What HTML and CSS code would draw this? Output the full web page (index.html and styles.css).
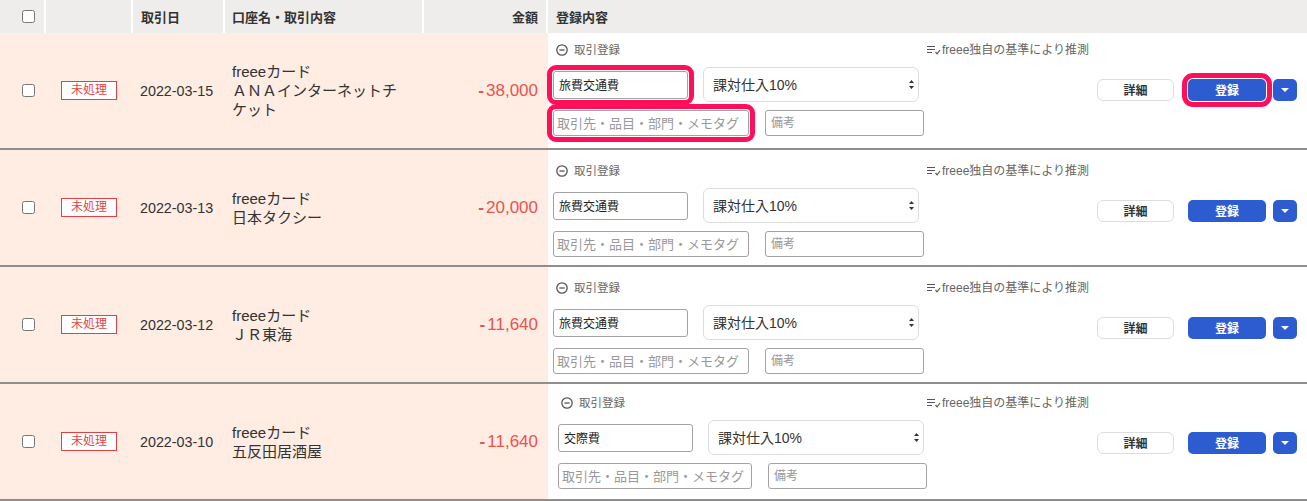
FILE: index.html
```html
<!DOCTYPE html>
<html lang="ja">
<head>
  <meta charset="UTF-8" />
  <meta name="viewport" content="width=device-width, initial-scale=1" />
  <title>明細一覧</title>
  <link rel="stylesheet" href="styles.css">
</head>
<body>
  <div class="list">
    <div class="row head">
      <div class="cell check"><input type="checkbox"></div>
      <div class="cell"></div>
      <div class="cell">取引日</div>
      <div class="cell">口座名・取引内容</div>
      <div class="cell amount">金額</div>
      <div class="cell">登録内容</div>
    </div>

    <div class="row item">
      <div class="cell check"><input type="checkbox"></div>
      <div class="cell status"><span class="badge">未処理</span></div>
      <div class="cell date">2022-03-15</div>
      <div class="cell account">freeeカード<br>ＡＮＡインターネットチケット</div>
      <div class="cell amount"><span class="minus">-</span>38,000</div>
      <div class="cell reg reg-top">
        <div class="reg-title"><svg width="12" height="12" viewBox="0 0 12 12"><circle cx="6" cy="6" r="5.2" fill="none" stroke="#555" stroke-width="1.3"/><path d="M3.4 6h5.2" stroke="#555" stroke-width="1.3"/></svg>取引登録</div>
        <div class="guess"><svg width="14" height="10" viewBox="0 0 14 10"><path d="M0 1.5h8M0 4.5h8M0 7.5h5" stroke="#555" stroke-width="1.2"/><path d="M8.5 7l1.6 1.8L13 5" fill="none" stroke="#555" stroke-width="1.2"/></svg>freee独自の基準により推測</div>
        <div class="actions">
          <button class="btn">詳細</button>
          <button class="btn primary mark">登録</button>
          <button class="btn primary caret"><svg width="8" height="4" viewBox="0 0 8 4"><path d="M0 0h8L4 4z" fill="#fff"/></svg></button>
        </div>
        <div class="line1">
          <input class="field item-name mark" value="旅費交通費">
          <div class="select"><select><option>課対仕入10%</option></select><svg width="5" height="9" viewBox="0 0 5 9"><path d="M2.5 0L5 3H0z M2.5 9L5 6H0z" fill="#333"/></svg></div>
        </div>
        <div class="line2">
          <input class="field tags mark" placeholder="取引先・品目・部門・メモタグ">
          <input class="field memo" placeholder="備考">
        </div>
      </div>
    </div>

    <div class="row item">
      <div class="cell check"><input type="checkbox"></div>
      <div class="cell status"><span class="badge">未処理</span></div>
      <div class="cell date">2022-03-13</div>
      <div class="cell account">freeeカード<br>日本タクシー</div>
      <div class="cell amount"><span class="minus">-</span>20,000</div>
      <div class="cell reg">
        <div class="reg-title"><svg width="12" height="12" viewBox="0 0 12 12"><circle cx="6" cy="6" r="5.2" fill="none" stroke="#555" stroke-width="1.3"/><path d="M3.4 6h5.2" stroke="#555" stroke-width="1.3"/></svg>取引登録</div>
        <div class="guess"><svg width="14" height="10" viewBox="0 0 14 10"><path d="M0 1.5h8M0 4.5h8M0 7.5h5" stroke="#555" stroke-width="1.2"/><path d="M8.5 7l1.6 1.8L13 5" fill="none" stroke="#555" stroke-width="1.2"/></svg>freee独自の基準により推測</div>
        <div class="actions">
          <button class="btn">詳細</button>
          <button class="btn primary">登録</button>
          <button class="btn primary caret"><svg width="8" height="4" viewBox="0 0 8 4"><path d="M0 0h8L4 4z" fill="#fff"/></svg></button>
        </div>
        <div class="line1">
          <input class="field item-name" value="旅費交通費">
          <div class="select"><select><option>課対仕入10%</option></select><svg width="5" height="9" viewBox="0 0 5 9"><path d="M2.5 0L5 3H0z M2.5 9L5 6H0z" fill="#333"/></svg></div>
        </div>
        <div class="line2">
          <input class="field tags" placeholder="取引先・品目・部門・メモタグ">
          <input class="field memo" placeholder="備考">
        </div>
      </div>
    </div>

    <div class="row item">
      <div class="cell check"><input type="checkbox"></div>
      <div class="cell status"><span class="badge">未処理</span></div>
      <div class="cell date">2022-03-12</div>
      <div class="cell account">freeeカード<br>ＪＲ東海</div>
      <div class="cell amount"><span class="minus">-</span>11,640</div>
      <div class="cell reg">
        <div class="reg-title"><svg width="12" height="12" viewBox="0 0 12 12"><circle cx="6" cy="6" r="5.2" fill="none" stroke="#555" stroke-width="1.3"/><path d="M3.4 6h5.2" stroke="#555" stroke-width="1.3"/></svg>取引登録</div>
        <div class="guess"><svg width="14" height="10" viewBox="0 0 14 10"><path d="M0 1.5h8M0 4.5h8M0 7.5h5" stroke="#555" stroke-width="1.2"/><path d="M8.5 7l1.6 1.8L13 5" fill="none" stroke="#555" stroke-width="1.2"/></svg>freee独自の基準により推測</div>
        <div class="actions">
          <button class="btn">詳細</button>
          <button class="btn primary">登録</button>
          <button class="btn primary caret"><svg width="8" height="4" viewBox="0 0 8 4"><path d="M0 0h8L4 4z" fill="#fff"/></svg></button>
        </div>
        <div class="line1">
          <input class="field item-name" value="旅費交通費">
          <div class="select"><select><option>課対仕入10%</option></select><svg width="5" height="9" viewBox="0 0 5 9"><path d="M2.5 0L5 3H0z M2.5 9L5 6H0z" fill="#333"/></svg></div>
        </div>
        <div class="line2">
          <input class="field tags" placeholder="取引先・品目・部門・メモタグ">
          <input class="field memo" placeholder="備考">
        </div>
      </div>
    </div>

    <div class="row item">
      <div class="cell check"><input type="checkbox"></div>
      <div class="cell status"><span class="badge">未処理</span></div>
      <div class="cell date">2022-03-10</div>
      <div class="cell account">freeeカード<br>五反田居酒屋</div>
      <div class="cell amount"><span class="minus">-</span>11,640</div>
      <div class="cell reg reg-shift">
        <div class="reg-title"><svg width="12" height="12" viewBox="0 0 12 12"><circle cx="6" cy="6" r="5.2" fill="none" stroke="#555" stroke-width="1.3"/><path d="M3.4 6h5.2" stroke="#555" stroke-width="1.3"/></svg>取引登録</div>
        <div class="guess"><svg width="14" height="10" viewBox="0 0 14 10"><path d="M0 1.5h8M0 4.5h8M0 7.5h5" stroke="#555" stroke-width="1.2"/><path d="M8.5 7l1.6 1.8L13 5" fill="none" stroke="#555" stroke-width="1.2"/></svg>freee独自の基準により推測</div>
        <div class="actions">
          <button class="btn">詳細</button>
          <button class="btn primary">登録</button>
          <button class="btn primary caret"><svg width="8" height="4" viewBox="0 0 8 4"><path d="M0 0h8L4 4z" fill="#fff"/></svg></button>
        </div>
        <div class="line1">
          <input class="field item-name" value="交際費">
          <div class="select"><select><option>課対仕入10%</option></select><svg width="5" height="9" viewBox="0 0 5 9"><path d="M2.5 0L5 3H0z M2.5 9L5 6H0z" fill="#333"/></svg></div>
        </div>
        <div class="line2">
          <input class="field tags" placeholder="取引先・品目・部門・メモタグ">
          <input class="field memo" placeholder="備考">
        </div>
      </div>
    </div>
  </div>
</body>
</html>
```

FILE: styles.css
```css
body {
  margin: 0;
  font-family: "Liberation Sans", "Noto Sans CJK JP", sans-serif;
  color: #333;
  background: #fff;
  overflow: hidden;
}
.row {
  display: grid;
  grid-template-columns: 44px 85px 90px 197px 122px 1fr;
  column-gap: 2px;
}
.head {
  background: #fff;
}
.head .cell {
  background: #eeedeb;
  height: 33px;
  display: flex;
  align-items: center;
  padding: 0 8px;
  font-size: 13px;
  font-weight: bold;
  color: #333;
}
.head .cell:nth-child(4) {
  padding-left: 7px;
}
.cell.check {
  padding: 0 0 0 22px;
  display: flex;
  align-items: center;
}
.check input {
  margin: 0;
  width: 13px;
  height: 13px;
}
.item {
  background: #ffece2;
  border-bottom: 2px solid #8e8e8e;
}
.item .cell {
  display: flex;
  align-items: center;
}
.status {
  justify-content: center;
}
.badge {
  display: inline-block;
  border: 1px solid #e43f45;
  background: #fff;
  color: #e43f45;
  font-size: 12px;
  line-height: 17px;
  padding: 0 9px;
  margin-left: 1px;
}
.date {
  padding-left: 7px;
  font-size: 14.3px;
}
.account {
  padding: 0 20px 0 7px;
  font-size: 15px;
  line-height: 19px;
}
.cell.amount {
  justify-content: flex-end;
  padding-right: 8px;
}
.item .amount {
  color: #e9534f;
  font-size: 17px;
}
.minus {
  font-weight: bold;
  margin-right: 2px;
}
.item .cell.reg {
  display: grid;
  grid-template-columns: 374px 1fr auto;
  align-items: start;
  padding: 14px 10px 8px 5px;
  background: #fff;
}
.item .cell.reg-top {
  padding-top: 10px;
  padding-bottom: 12px;
}
.item .cell.reg-shift {
  grid-template-columns: 369px 1fr auto;
  padding-top: 12px;
  padding-bottom: 10px;
  padding-left: 10px;
}
.reg-title {
  grid-column: 1;
  grid-row: 1;
  height: 14px;
  line-height: 14px;
  padding-left: 3px;
  font-size: 11.5px;
  color: #666;
  display: flex;
  align-items: center;
  gap: 6px;
}
.guess {
  grid-column: 2;
  grid-row: 1;
  height: 14px;
  line-height: 14px;
  font-size: 12px;
  color: #666;
  display: flex;
  align-items: center;
  gap: 1px;
}
.actions {
  grid-column: 3;
  grid-row: 1 / 4;
  align-self: center;
  display: flex;
}
.btn {
  height: 22px;
  border: 1px solid #ddd;
  border-radius: 6px;
  background: #fff;
  font-family: inherit;
  font-size: 12px;
  font-weight: bold;
  color: #333;
  padding: 0;
  width: 77px;
  cursor: pointer;
}
.btn.primary {
  margin-left: 14px;
  width: 78px;
  border: none;
  border-radius: 5px;
  background: #2c5ccf;
  color: #fff;
}
.btn.caret {
  margin-left: 7px;
  width: 24px;
  display: flex;
  align-items: center;
  justify-content: center;
}
.line1 {
  grid-column: 1;
  grid-row: 2;
  margin-top: 10px;
  display: flex;
  align-items: center;
  gap: 15px;
}
.line2 {
  grid-column: 1;
  grid-row: 3;
  margin-top: 8px;
  display: flex;
  gap: 16px;
}
.field {
  box-sizing: border-box;
  border: 1px solid #a3a3a3;
  border-radius: 3px;
  background: #fff;
  font-family: inherit;
  color: #222;
  padding: 0 5px;
  margin: 0;
  outline: none;
}
.field::placeholder {
  color: #999;
}
.item-name {
  width: 135px;
  height: 28px;
  font-size: 12px;
}
.tags {
  width: 196px;
  height: 26px;
  font-size: 13px;
  padding-left: 3px;
  padding-right: 2px;
}
.memo {
  width: 159px;
  height: 26px;
  font-size: 12px;
}
.select {
  position: relative;
  width: 216px;
  height: 35px;
}
.select select {
  appearance: none;
  box-sizing: border-box;
  width: 100%;
  height: 100%;
  border: 1px solid #ddd;
  border-radius: 6px;
  background: #fff;
  font-family: inherit;
  font-size: 14px;
  color: #333;
  padding: 0 9px;
  margin: 0;
}
.select svg {
  position: absolute;
  right: 5px;
  top: 13px;
}
.mark {
  outline: 5px solid #ff0f5a;
  outline-offset: 1px;
}
```
